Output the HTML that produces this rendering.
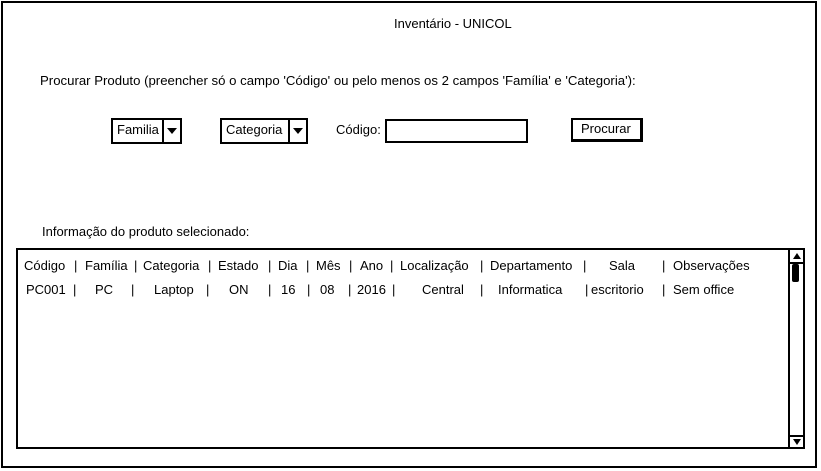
<!DOCTYPE html>
<html><head><meta charset="utf-8"><style>
*{margin:0;padding:0;box-sizing:border-box}
body{width:821px;height:471px;background:#fff;position:relative;overflow:hidden;font-family:"Liberation Sans",sans-serif;font-size:13px;color:#000}
.a{position:absolute;white-space:nowrap;line-height:14px}
.box{position:absolute;border:2px solid #000;background:#fff}
</style></head><body>
<div class="box" style="left:1px;top:1px;width:816px;height:467px;border-width:2px"></div>
<div class="a" style="left:394px;top:17px">Inventário - UNICOL</div>
<div class="a" style="left:40px;top:74px;font-size:13.2px">Procurar Produto (preencher só o campo 'Código' ou pelo menos os 2 campos 'Família' e 'Categoria'):</div>

<div class="box" style="left:111px;top:118px;width:71px;height:26px"></div>
<div class="a" style="left:117px;top:123px">Familia</div>
<div style="position:absolute;left:162px;top:119px;width:2px;height:24px;background:#000"></div>
<div style="position:absolute;left:167px;top:128px;width:0;height:0;border-left:5px solid transparent;border-right:5px solid transparent;border-top:6px solid #000"></div>

<div class="box" style="left:220px;top:118px;width:88px;height:26px"></div>
<div class="a" style="left:226px;top:123px">Categoria</div>
<div style="position:absolute;left:288px;top:119px;width:2px;height:24px;background:#000"></div>
<div style="position:absolute;left:293px;top:128px;width:0;height:0;border-left:5px solid transparent;border-right:5px solid transparent;border-top:6px solid #000"></div>

<div class="a" style="left:336px;top:123px">Código:</div>
<div class="box" style="left:385px;top:119px;width:143px;height:24px"></div>

<div class="box" style="left:571px;top:118px;width:72px;height:24px;border-right-width:3px;border-bottom-width:3px"></div>
<div class="a" style="left:581px;top:122px">Procurar</div>

<div class="a" style="left:42px;top:225px">Informação do produto selecionado:</div>

<div class="box" style="left:16px;top:248px;width:789px;height:201px"></div>
<div style="position:absolute;left:788px;top:249px;width:2px;height:199px;background:#000"></div>
<div style="position:absolute;left:790px;top:262px;width:14px;height:2px;background:#000"></div>
<div style="position:absolute;left:790px;top:435px;width:14px;height:2px;background:#000"></div>
<div style="position:absolute;left:792px;top:264px;width:7px;height:18px;background:#000;border-radius:2px"></div>
<div style="position:absolute;left:793px;top:253px;border-left:4px solid transparent;border-right:4px solid transparent;border-bottom:6px solid #000"></div>
<div style="position:absolute;left:793px;top:439px;border-left:4px solid transparent;border-right:4px solid transparent;border-top:6px solid #000"></div>

<div class="a" style="left:24px;top:259px">Código</div><div class="a" style="left:74px;top:259px">|</div>
<div class="a" style="left:85px;top:259px">Família</div><div class="a" style="left:134px;top:259px">|</div>
<div class="a" style="left:143px;top:259px">Categoria</div><div class="a" style="left:208px;top:259px">|</div>
<div class="a" style="left:218px;top:259px">Estado</div><div class="a" style="left:268px;top:259px">|</div>
<div class="a" style="left:278px;top:259px">Dia</div><div class="a" style="left:306px;top:259px">|</div>
<div class="a" style="left:316px;top:259px">Mês</div><div class="a" style="left:349px;top:259px">|</div>
<div class="a" style="left:360px;top:259px">Ano</div><div class="a" style="left:390px;top:259px">|</div>
<div class="a" style="left:400px;top:259px">Localização</div><div class="a" style="left:480px;top:259px">|</div>
<div class="a" style="left:490px;top:259px">Departamento</div><div class="a" style="left:583px;top:259px">|</div>
<div class="a" style="left:609px;top:259px">Sala</div><div class="a" style="left:662px;top:259px">|</div>
<div class="a" style="left:673px;top:259px">Observações</div>

<div class="a" style="left:26px;top:283px">PC001</div><div class="a" style="left:73px;top:283px">|</div>
<div class="a" style="left:95px;top:283px">PC</div><div class="a" style="left:131px;top:283px">|</div>
<div class="a" style="left:154px;top:283px">Laptop</div><div class="a" style="left:206px;top:283px">|</div>
<div class="a" style="left:229px;top:283px">ON</div><div class="a" style="left:268px;top:283px">|</div>
<div class="a" style="left:281px;top:283px">16</div><div class="a" style="left:307px;top:283px">|</div>
<div class="a" style="left:320px;top:283px">08</div><div class="a" style="left:348px;top:283px">|</div>
<div class="a" style="left:357px;top:283px">2016</div><div class="a" style="left:392px;top:283px">|</div>
<div class="a" style="left:422px;top:283px">Central</div><div class="a" style="left:480px;top:283px">|</div>
<div class="a" style="left:498px;top:283px">Informatica</div><div class="a" style="left:585px;top:283px">|</div>
<div class="a" style="left:591px;top:283px">escritorio</div><div class="a" style="left:662px;top:283px">|</div>
<div class="a" style="left:673px;top:283px">Sem office</div>
</body></html>
